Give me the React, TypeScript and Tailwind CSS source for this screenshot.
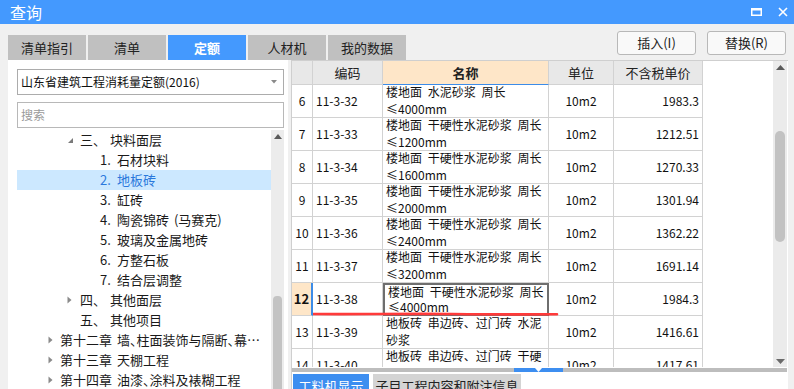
import type { ReactNode } from 'react';

type Row = {
  no: number;
  code: string;
  name: [string, string];
  unit: string;
  price: string;
};

const rows: Row[] = [
  { no: 6, code: '11-3-32', name: ['楼地面 水泥砂浆 周长', '≤4000mm'], unit: '10m2', price: '1983.3' },
  { no: 7, code: '11-3-33', name: ['楼地面 干硬性水泥砂浆 周长', '≤1200mm'], unit: '10m2', price: '1212.51' },
  { no: 8, code: '11-3-34', name: ['楼地面 干硬性水泥砂浆 周长', '≤1600mm'], unit: '10m2', price: '1270.33' },
  { no: 9, code: '11-3-35', name: ['楼地面 干硬性水泥砂浆 周长', '≤2000mm'], unit: '10m2', price: '1301.94' },
  { no: 10, code: '11-3-36', name: ['楼地面 干硬性水泥砂浆 周长', '≤2400mm'], unit: '10m2', price: '1362.22' },
  { no: 11, code: '11-3-37', name: ['楼地面 干硬性水泥砂浆 周长', '≤3200mm'], unit: '10m2', price: '1691.14' },
  { no: 12, code: '11-3-38', name: ['楼地面 干硬性水泥砂浆 周长', '≤4000mm'], unit: '10m2', price: '1984.3' },
  { no: 13, code: '11-3-39', name: ['地板砖 串边砖、过门砖 水泥', '砂浆'], unit: '10m2', price: '1416.61' },
  { no: 14, code: '11-3-40', name: ['地板砖 串边砖、过门砖 干硬', '性水泥砂浆'], unit: '10m2', price: '1417.61' },
];

const tabs = ['清单指引', '清单', '定额', '人材机', '我的数据'];

const OpenArrow = () => (
  <svg width="13" height="20" viewBox="0 0 13 20">
    <path d="M6 8 L6 13 L1 13 Z" fill="#7a7a7a" />
  </svg>
);

const ClosedArrow = () => (
  <svg width="13" height="20" viewBox="0 0 13 20">
    <path d="M1.5 6.5 L5.5 10 L1.5 13.5 Z" fill="#8a8a8a" />
  </svg>
);

const TreeRow = ({
  pl,
  children,
  selected,
}: {
  pl: string;
  children: ReactNode;
  selected?: boolean;
}) => (
  <div
    className={`h-[20px] flex items-center whitespace-nowrap text-[13px] [word-spacing:2px] ${pl} ${
      selected ? 'bg-[#cce8ff] text-[#2a78dc]' : 'text-[#1a1a1a]'
    }`}
  >
    {children}
  </div>
);

const Num = ({ n }: { n: string }) => <span className="w-[17px]">{n}</span>;

const App = () => {
  return (
    <div className="w-[794px] h-[389px] overflow-hidden bg-[#f0f0f0] flex flex-col font-['Noto_Sans_CJK_SC',sans-serif]">
      {/* title bar */}
      <div className="h-[24px] shrink-0 bg-[#4499fe] flex items-center pl-[10px] pr-[6px]">
        <span className="text-white text-[16px] leading-none">查询</span>
        <div className="ml-auto flex items-center gap-[16px]">
          <svg width="11" height="8" viewBox="0 0 11 8">
            <rect x="0.75" y="1" width="9.5" height="6.25" fill="none" stroke="#fff" strokeWidth="1.5" />
            <rect x="0" y="0" width="11" height="2.5" fill="#fff" />
          </svg>
          <svg width="10" height="10" viewBox="0 0 10 10">
            <path d="M1 1 L9 9 M9 1 L1 9" stroke="#fff" strokeWidth="1.6" />
          </svg>
        </div>
      </div>

      {/* tabs + buttons */}
      <div className="h-[36px] shrink-0 flex px-[8px]">
        <div className="flex items-end gap-[2px]">
          {tabs.map((t) => (
            <div
              key={t}
              className={`w-[78px] h-[25px] flex items-center justify-center text-[13px] ${
                t === '定额' ? 'bg-[#4499fe] text-white font-bold' : 'bg-[#c0c0c0] text-[#222]'
              }`}
            >
              {t}
            </div>
          ))}
        </div>
        <div className="ml-auto flex gap-[11px] pt-[7px]">
          {['插入(I)', '替换(R)'].map((b) => (
            <button
              key={b}
              type="button"
              className="w-[79px] h-[24px] bg-[#f9f9f9] border border-[#b8b8b8] rounded-[3px] text-[13px] text-[#222] flex items-center justify-center"
            >
              {b}
            </button>
          ))}
        </div>
      </div>

      {/* content */}
      <div className="flex-1 min-h-0 flex pl-[8px]">
        {/* left panel */}
        <div className="w-[280px] bg-white flex flex-col pt-[9px] pl-[9px] pr-[4px]">
          <div className="h-[26px] border border-[#acacac] flex items-center pl-[3px] pr-[6px] text-[12px] text-[#111]">
            <span>山东省建筑工程消耗量定额(2016)</span>
            <svg className="ml-auto" width="6" height="4" viewBox="0 0 6 4">
              <path d="M0 0 L6 0 L3 3.5 Z" fill="#8a8a8a" />
            </svg>
          </div>
          <div className="h-[26px] mt-[7px] border border-[#b8b8b8] flex items-center pl-[3px] text-[12px] text-[#9a9a9a]">
            搜索
          </div>
          <div className="flex-1 min-h-0 mt-[2px] flex">
            <div className="flex-1 min-w-0 overflow-hidden">
              <TreeRow pl="pl-[50px]">
                <OpenArrow />
                <span className="w-[30px]">三、</span>
                <span>块料面层</span>
              </TreeRow>
              <TreeRow pl="pl-[83px]">
                <Num n="1." />
                <span>石材块料</span>
              </TreeRow>
              <TreeRow pl="pl-[83px]" selected>
                <Num n="2." />
                <span>地板砖</span>
              </TreeRow>
              <TreeRow pl="pl-[83px]">
                <Num n="3." />
                <span>缸砖</span>
              </TreeRow>
              <TreeRow pl="pl-[83px]">
                <Num n="4." />
                <span>陶瓷锦砖 (马赛克)</span>
              </TreeRow>
              <TreeRow pl="pl-[83px]">
                <Num n="5." />
                <span>玻璃及金属地砖</span>
              </TreeRow>
              <TreeRow pl="pl-[83px]">
                <Num n="6." />
                <span>方整石板</span>
              </TreeRow>
              <TreeRow pl="pl-[83px]">
                <Num n="7." />
                <span>结合层调整</span>
              </TreeRow>
              <TreeRow pl="pl-[49px]">
                <ClosedArrow />
                <span className="w-[31px] pl-[1px]">四、</span>
                <span>其他面层</span>
              </TreeRow>
              <TreeRow pl="pl-[63px]">
                <span className="w-[30px]">五、</span>
                <span>其他项目</span>
              </TreeRow>
              <TreeRow pl="pl-[30px]">
                <ClosedArrow />
                <span className="[font-feature-settings:'halt']">第十二章 墙、柱面装饰与隔断、幕…</span>
              </TreeRow>
              <TreeRow pl="pl-[30px]">
                <ClosedArrow />
                <span>第十三章 天棚工程</span>
              </TreeRow>
              <TreeRow pl="pl-[30px]">
                <ClosedArrow />
                <span className="[font-feature-settings:'halt']">第十四章 油漆、涂料及裱糊工程</span>
              </TreeRow>
            </div>
            <div className="w-[13px] bg-[#ececec] flex flex-col items-center">
              <svg className="mt-[4px]" width="8" height="5" viewBox="0 0 8 5">
                <path d="M0 5 L4 0 L8 5 Z" fill="#5a5a5a" />
              </svg>
              <div className="mt-[157px] w-[9px] flex-1 bg-[#c3c3c3] rounded-t-[4px]" />
            </div>
          </div>
        </div>

        {/* right panel */}
        <div className="ml-[3px] w-[497px] bg-white border-l border-t border-[#cfcfcf] flex flex-col">
          <div className="h-[306px] flex">
            <div className="relative w-[481px] overflow-hidden">
              {/* header */}
              <div className="flex h-[24px] text-[13px] text-[#222]">
                <div className="w-[21px] bg-[#e8e8e8] border-r border-b border-[#d2d2d2]" />
                <div className="w-[70px] bg-[#e8e8e8] border-r border-b border-[#d2d2d2] flex items-center justify-center">
                  编码
                </div>
                <div className="w-[166px] bg-[#fee6c8] border-r border-b border-b-[#3c8ce8] border-r-[#d2d2d2] flex items-center justify-center font-bold">
                  名称
                </div>
                <div className="w-[65px] bg-[#e8e8e8] border-r border-b border-[#d2d2d2] flex items-center justify-center">
                  单位
                </div>
                <div className="w-[89px] bg-[#e8e8e8] border-r border-b border-[#d2d2d2] flex items-center justify-center">
                  不含税单价
                </div>
              </div>
              {rows.map((r) => {
                const sel = r.no === 12;
                return (
                  <div key={r.no} className="flex h-[33px] text-[12px] text-[#111]">
                    <div
                      className={`w-[21px] border-b flex items-center justify-center ${
                        sel
                          ? 'bg-[#fee6c8] font-bold text-[13px] border-r-2 border-r-[#3c8ce8] border-b-[#d2d2d2]'
                          : 'border-r border-[#d2d2d2]'
                      }`}
                    >
                      {r.no}
                    </div>
                    <div className="w-[70px] border-r border-b border-[#d2d2d2] flex items-center pl-[3px]">
                      {r.code}
                    </div>
                    <div
                      className={`w-[166px] border-b pl-[3px] [word-spacing:3px] whitespace-nowrap ${
                        sel ? 'border-2 border-[#6e6e6e] leading-[15px]' : 'border-r border-[#d2d2d2] leading-[17px]'
                      }`}
                    >
                      <div className={`flex flex-col ${sel ? '-mt-[1px]' : '-mt-[2px]'}`}>
                        <span>{r.name[0]}</span>
                        <span>{r.name[1]}</span>
                      </div>
                    </div>
                    <div className="w-[65px] border-r border-b border-[#d2d2d2] flex items-center justify-center">
                      {r.unit}
                    </div>
                    <div className="w-[89px] border-r border-b border-[#d2d2d2] flex items-center justify-end pr-[3px]">
                      {r.price}
                    </div>
                  </div>
                );
              })}
              {/* red marker line */}
              <svg
                className="absolute left-[21px] top-[250px]"
                width="246"
                height="6"
                viewBox="0 0 246 6"
              >
                <path
                  d="M0 3 C40 3.5 90 2.5 140 3 S210 3.5 244 3.2"
                  stroke="#ff3a3a"
                  strokeWidth="2.6"
                  fill="none"
                  strokeLinecap="round"
                />
              </svg>
            </div>
            {/* vertical scrollbar */}
            <div className="w-[14px] bg-[#ebebeb] flex flex-col items-center">
              <svg className="mt-[4px]" width="9" height="5" viewBox="0 0 9 5">
                <path d="M0 5 L4.5 0 L9 5 Z" fill="#5a5a5a" />
              </svg>
              <div className="mt-[61px] w-[10px] h-[111px] bg-[#c2c2c2] rounded-[5px]" />
              <svg className="mt-auto mb-[3px]" width="9" height="5" viewBox="0 0 9 5">
                <path d="M0 0 L4.5 5 L9 0 Z" fill="#6a6a6a" />
              </svg>
            </div>
          </div>
          {/* horizontal splitter bar */}
          <div className="mt-[1px] h-[6px] flex">
            <div className="w-[222px] bg-[#bdbdbd]" />
            <div className="w-[49px] bg-[#3d8ef0] flex items-center justify-center">
              <svg width="7" height="4" viewBox="0 0 7 4">
                <path d="M0 0 L7 0 L3.5 4 Z" fill="#fff" />
              </svg>
            </div>
            <div className="w-[224px] bg-[#bdbdbd]" />
          </div>
          {/* bottom tabs */}
          <div className="mt-[2px] flex gap-[4px] pl-[1px]">
            <div className="w-[76px] h-[24px] bg-[#3d8ef0] text-white text-[13px] flex items-center justify-center">
              工料机显示
            </div>
            <div className="w-[148px] h-[24px] bg-[#d4d4d4] text-[#222] text-[13px] flex items-center justify-center">
              子目工程内容和附注信息
            </div>
          </div>
        </div>
      </div>
    </div>
  );
};

export default App;
